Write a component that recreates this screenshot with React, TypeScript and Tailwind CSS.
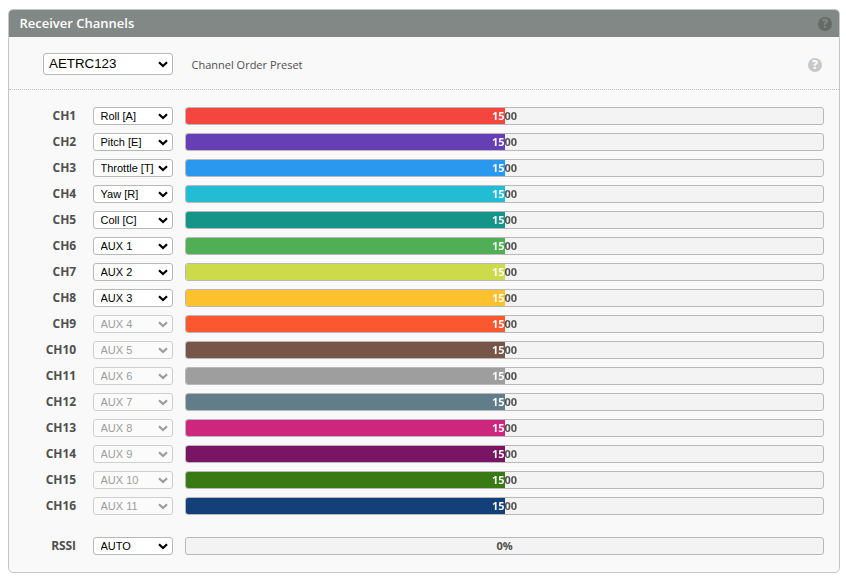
const channels = [
  { option: "Roll [A]", fill: "bg-[#f4463f]" },
  { option: "Pitch [E]", fill: "bg-[#673fb4]" },
  { option: "Throttle [T]", fill: "bg-[#2b98f0]" },
  { option: "Yaw [R]", fill: "bg-[#22bcd4]" },
  { option: "Coll [C]", fill: "bg-[#159588]" },
  { option: "AUX 1", fill: "bg-[#50ae55]" },
  { option: "AUX 2", fill: "bg-[#cdda49]" },
  { option: "AUX 3", fill: "bg-[#fdc02f]" },
  { option: "AUX 4", fill: "bg-[#fc5830]" },
  { option: "AUX 5", fill: "bg-[#785549]" },
  { option: "AUX 6", fill: "bg-[#9e9e9e]" },
  { option: "AUX 7", fill: "bg-[#617d8a]" },
  { option: "AUX 8", fill: "bg-[#cf267d]" },
  { option: "AUX 9", fill: "bg-[#7a1464]" },
  { option: "AUX 10", fill: "bg-[#3a7a14]" },
  { option: "AUX 11", fill: "bg-[#14407a]" },
];

function HelpIcon({ className }: { className: string }) {
  return (
    <span
      className={`flex size-3.5 items-center justify-center rounded-full text-[12px] leading-none font-extrabold ${className}`}
    >
      ?
    </span>
  );
}

function Chevron({ className }: { className: string }) {
  return (
    <svg
      viewBox="0 0 10 7"
      className={`pointer-events-none absolute right-[5px] h-[7px] w-[10px] ${className}`}
      fill="none"
      stroke="currentColor"
      strokeWidth="2.2"
    >
      <path d="M1 1.2 L5 5 L9 1.2" />
    </svg>
  );
}

function ChannelSelect({ value, disabled = false }: { value: string; disabled?: boolean }) {
  return (
    <div className="relative ml-[17px] h-[18px] w-20 shrink-0">
      <select
        disabled={disabled}
        className="block h-[18px] w-20 appearance-none rounded-[3px] border border-[#b8b8b8] bg-white pl-[6.5px] font-['Liberation_Sans',Arial,sans-serif] text-[11px] text-black disabled:border-[#cfcfcf] disabled:bg-[#fbfbfb] disabled:text-[#9c9c9c] disabled:opacity-100"
      >
        <option>{value}</option>
      </select>
      <Chevron className={disabled ? "top-[6px] text-[#9c9c9c]" : "top-[6px] text-black"} />
    </div>
  );
}

function ChannelBar({ fill }: { fill: string }) {
  return (
    <div className="relative ml-3 h-[18px] w-[639px] rounded-[3px] border border-[#b8b8b8] bg-[#f3f3f3] text-center text-[11px] leading-4 font-bold">
      <div className={`absolute inset-y-0 left-0 w-1/2 rounded-l-[2px] ${fill}`} />
      <div className="relative bg-linear-to-r from-white from-50% to-[#4f4f4f] to-50% bg-clip-text text-transparent">
        1500
      </div>
    </div>
  );
}

export default function App() {
  return (
    <div className="h-[578px] w-[846px] bg-white pt-[9px] pl-2 font-['Open_Sans',sans-serif]">
      <div className="h-[564px] w-[832px] overflow-hidden rounded-[5px] border border-[#c6c6c6] bg-[#f9f9f9]">
        <div className="flex h-[27px] items-center justify-between bg-[#828885] pr-[7px] pl-[10.5px]">
          <h1 className="text-[13px] leading-none font-semibold text-white">Receiver Channels</h1>
          <HelpIcon className="bg-[#666b69] text-[#828885]" />
        </div>

        <div className="flex h-[53px] items-center border-b border-dotted border-[#bbb] pt-[2px] pr-[17px] pl-[34px]">
          <div className="relative h-[22px] w-[130px]">
            <select className="block h-[22px] w-[130px] appearance-none rounded-[3px] border border-[#b8b8b8] bg-white pl-[5px] font-['Liberation_Sans',Arial,sans-serif] text-[13.333px] text-black">
              <option>AETRC123</option>
            </select>
            <Chevron className="top-[8px] text-black" />
          </div>
          <span className="ml-[18.5px] pt-[2px] text-[11px] text-[#4f4f4f]">Channel Order Preset</span>
          <HelpIcon className="mt-[2px] ml-auto bg-[#c8c8c8] text-[#f9f9f9]" />
        </div>

        <div className="flex flex-col gap-2 pt-[17px]">
          {channels.map((channel, index) => (
            <div key={channel.option} className="flex h-[18px] items-center">
              <span className="w-[67px] text-right text-[12px] leading-[18px] font-bold tracking-[-0.1px] text-[#4f4f4f]">
                CH{index + 1}
              </span>
              <ChannelSelect value={channel.option} disabled={index >= 8} />
              <ChannelBar fill={channel.fill} />
            </div>
          ))}
        </div>

        <div className="mt-[22px] flex h-[18px] items-center">
          <span className="w-[67px] text-right text-[12px] leading-[18px] font-bold tracking-[-0.1px] text-[#4f4f4f]">
            RSSI
          </span>
          <ChannelSelect value="AUTO" />
          <div className="ml-3 h-[18px] w-[639px] rounded-[3px] border border-[#b8b8b8] bg-[#f3f3f3] text-center text-[11px] leading-4 font-bold text-[#4f4f4f]">
            0%
          </div>
        </div>
      </div>
    </div>
  );
}
